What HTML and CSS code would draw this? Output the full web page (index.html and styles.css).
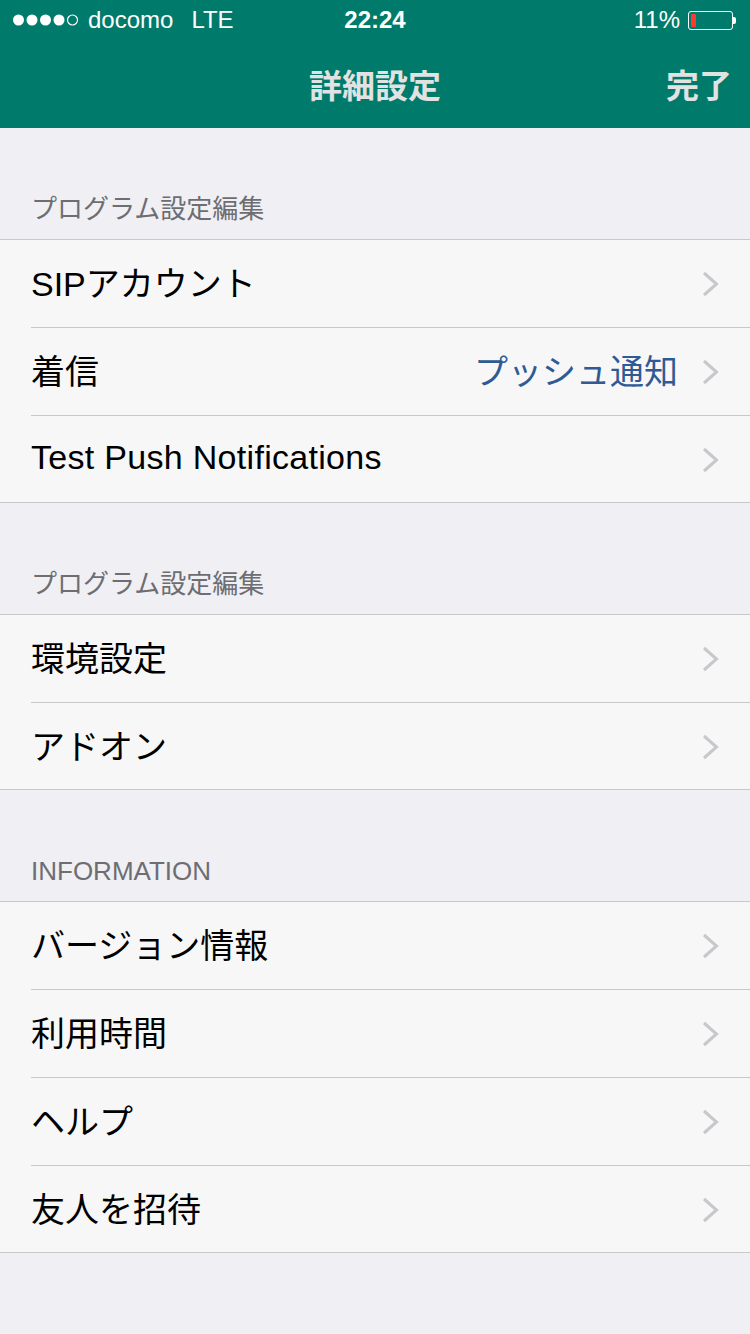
FILE: index.html
```html
<!DOCTYPE html>
<html lang="ja">
<head>
<meta charset="utf-8">
<link rel="stylesheet" href="styles.css">
</head>
<body>
<div class="top">
  <div class="status">
    <div class="st-left">
      <svg class="dots" width="68" height="14" viewBox="0 0 68 14">
        <circle cx="6.5" cy="7" r="5.5" fill="#fff"/>
        <circle cx="20" cy="7" r="5.5" fill="#fff"/>
        <circle cx="33.5" cy="7" r="5.5" fill="#fff"/>
        <circle cx="47" cy="7" r="5.5" fill="#fff"/>
        <circle cx="60.5" cy="7" r="5" fill="none" stroke="#fff" stroke-width="1.2"/>
      </svg>
      <span>docomo</span><span class="lte">LTE</span>
    </div>
    <div class="st-time">22:24</div>
    <div class="st-right">11% <span class="battery"><span class="level"></span></span><span class="nub"></span></div>
  </div>
  <div class="nav">
    <div class="nav-title">詳細設定</div>
    <div class="nav-done">完了</div>
  </div>
</div>

<div class="section-head">プログラム設定編集</div>
<ul class="group">
  <li class="row"><span class="label">SIPアカウント</span><svg class="chev" width="17" height="26" viewBox="0 0 17 26"><polyline points="2,2 14.5,13 2,24" fill="none" stroke="#c7c7cc" stroke-width="3"/></svg></li>
  <li class="row"><span class="label">着信</span><span class="value">プッシュ通知</span><svg class="chev" width="17" height="26" viewBox="0 0 17 26"><polyline points="2,2 14.5,13 2,24" fill="none" stroke="#c7c7cc" stroke-width="3"/></svg></li>
  <li class="row"><span class="label latin">Test Push Notifications</span><svg class="chev" width="17" height="26" viewBox="0 0 17 26"><polyline points="2,2 14.5,13 2,24" fill="none" stroke="#c7c7cc" stroke-width="3"/></svg></li>
</ul>

<div class="section-head">プログラム設定編集</div>
<ul class="group">
  <li class="row"><span class="label">環境設定</span><svg class="chev" width="17" height="26" viewBox="0 0 17 26"><polyline points="2,2 14.5,13 2,24" fill="none" stroke="#c7c7cc" stroke-width="3"/></svg></li>
  <li class="row"><span class="label">アドオン</span><svg class="chev" width="17" height="26" viewBox="0 0 17 26"><polyline points="2,2 14.5,13 2,24" fill="none" stroke="#c7c7cc" stroke-width="3"/></svg></li>
</ul>

<div class="section-head">INFORMATION</div>
<ul class="group">
  <li class="row"><span class="label">バージョン情報</span><svg class="chev" width="17" height="26" viewBox="0 0 17 26"><polyline points="2,2 14.5,13 2,24" fill="none" stroke="#c7c7cc" stroke-width="3"/></svg></li>
  <li class="row"><span class="label">利用時間</span><svg class="chev" width="17" height="26" viewBox="0 0 17 26"><polyline points="2,2 14.5,13 2,24" fill="none" stroke="#c7c7cc" stroke-width="3"/></svg></li>
  <li class="row"><span class="label">ヘルプ</span><svg class="chev" width="17" height="26" viewBox="0 0 17 26"><polyline points="2,2 14.5,13 2,24" fill="none" stroke="#c7c7cc" stroke-width="3"/></svg></li>
  <li class="row"><span class="label">友人を招待</span><svg class="chev" width="17" height="26" viewBox="0 0 17 26"><polyline points="2,2 14.5,13 2,24" fill="none" stroke="#c7c7cc" stroke-width="3"/></svg></li>
</ul>
</body>
</html>
```

FILE: styles.css
```css
* { box-sizing: border-box; }
html, body {
  margin: 0;
  padding: 0;
  background: #efeff4;
  font-family: "Liberation Sans", "Noto Sans CJK JP", sans-serif;
  width: 750px;
  height: 1334px;
  overflow: hidden;
}
.top {
  background: #007b6b;
  height: 128px;
  color: #fff;
}
.status {
  height: 40px;
  display: flex;
  align-items: center;
  justify-content: space-between;
  padding: 0 14px 0 12px;
  font-size: 24px;
  position: relative;
}
.st-left { display: flex; align-items: center; gap: 8px; }
.dots { display: block; }
.lte { margin-left: 10px; }
.st-time {
  position: absolute;
  left: 0; right: 0;
  text-align: center;
  font-weight: bold;
  font-size: 24px;
  pointer-events: none;
}
.st-right { display: flex; align-items: center; gap: 8px; }
.battery {
  width: 45px;
  height: 19px;
  border: 1.5px solid #fff;
  border-radius: 3px;
  padding: 2px;
  display: flex;
}
.level { width: 5px; background: #ff3b30; border-radius: 1px; }
.nub { width: 3px; height: 7px; background: #fff; margin-left: -8px; border-radius: 0 2px 2px 0; }
.nav {
  height: 88px;
  display: flex;
  align-items: center;
  justify-content: center;
  position: relative;
  color: #e2e2e2;
  font-weight: bold;
  font-size: 33px;
}
.nav-done {
  position: absolute;
  right: 18px;
  top: 0; bottom: 0;
  display: flex;
  align-items: center;
}
.section-head {
  height: 111px;
  display: flex;
  align-items: flex-end;
  padding: 0 0 14px 31px;
  font-size: 26px;
  color: #6d6d72;
}
.group {
  list-style: none;
  margin: 0;
  padding: 0;
  background: #f7f7f7;
  border-top: 1px solid #c8c7cc;
  border-bottom: 1px solid #c8c7cc;
}
.row {
  height: 88px;
  margin-left: 31px;
  padding-right: 31px;
  padding-bottom: 4px;
  display: flex;
  align-items: center;
  border-bottom: 1px solid #c8c7cc;
  font-size: 34px;
  color: #000;
}
.row:last-child { border-bottom: none; height: 86px; padding-bottom: 3px; }
.label { flex: 1; }
.latin { letter-spacing: 0.3px; }
.value { color: #2f5a96; margin-right: 24px; }
.chev { display: block; flex: none; margin-top: 4px; }
```
